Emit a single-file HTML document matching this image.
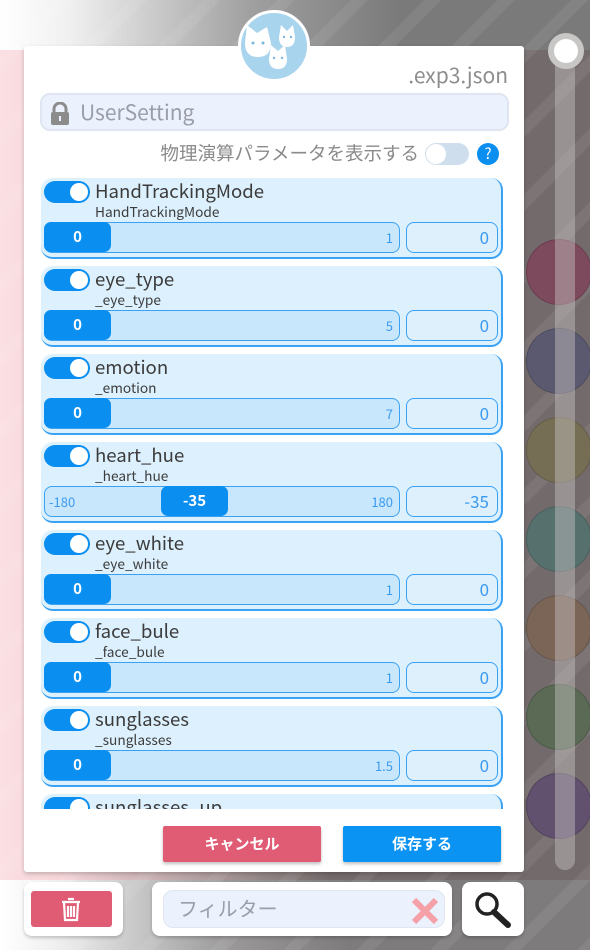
<!DOCTYPE html>
<html><head><meta charset="utf-8"><style>
*{box-sizing:border-box;margin:0;padding:0}
body{width:590px;height:950px;overflow:hidden;position:relative;font-family:"Noto Sans CJK JP","Liberation Sans",sans-serif;background:#726a6a}
.bgl{position:absolute;left:0;top:0;width:590px;height:950px;background:linear-gradient(90deg,#fbdfe2 0,#f6d6d9 60px,#b7a3a5 190px,#736b6b 330px,#736b6b 100%)}
.bgt{position:absolute;left:0;top:0;width:590px;height:50px;background:linear-gradient(90deg,#fff 0,#f0f0f0 70px,#a0a0a0 250px,#7a7a7a 400px)}
.bgb{position:absolute;left:0;top:880px;width:590px;height:70px;background:linear-gradient(90deg,#fff 0,#eee 60px,#9a9898 230px,#7d7b7b 350px)}
.stripes{position:absolute;left:0;top:0;width:590px;height:950px;background:repeating-linear-gradient(135deg,rgba(255,255,255,0) 0 40px,rgba(255,255,255,.07) 40px 52px)}
.panel{position:absolute;left:24px;top:46px;width:500px;height:826px;background:#fff;border-radius:3px;box-shadow:0 2px 4px rgba(0,0,0,.2)}
.avatar{position:absolute;left:238px;top:10px;width:72px;height:72px;border-radius:50%;background:#a9d4ee;border:3px solid #fff}
.ext{position:absolute;right:82px;top:60px;font-size:21px;color:#8d8d8d}
.name{position:absolute;left:40px;top:93px;width:469px;height:38px;border-radius:10px;background:#ebf1fd;border:2px solid #dfe5f1;color:#9a9ea8;font-size:21px;line-height:24px;padding:5px 0 0 38px}
.lock{position:absolute;left:8px;top:7px}
.phys{position:absolute;right:171px;top:141px;font-size:18.5px;line-height:24px;color:#8a8a8a}
.tog0{position:absolute;left:425px;top:143px;width:44px;height:22px;border-radius:11px;background:#cfdeec}
.tog0:after{content:"";position:absolute;left:1px;top:1px;width:20px;height:20px;border-radius:50%;background:#fff}
.help{position:absolute;left:477px;top:143px;width:22px;height:22px;border-radius:50%;background:#0a8ef0;color:#fff;font-size:15px;text-align:center;line-height:22px}
.list{position:absolute;left:40px;top:178px;width:464px;height:631px;overflow:hidden}
.card{position:absolute;left:1px;width:462px;height:81px;background:#ddf0fd;border-radius:12px;border-bottom:2px solid #3aa2f5;border-right:2px solid #3aa2f5}
.tg{position:absolute;left:3px;top:3px;width:46px;height:22px;border-radius:11px;background:#0a8ef0}
.tg:after{content:"";position:absolute;right:2px;top:2px;width:18px;height:18px;border-radius:50%;background:#fff}
.t1{position:absolute;left:54px;top:0px;font-size:18.6px;line-height:26px;color:#3c3c3c}
.t2{position:absolute;left:54px;top:24px;font-size:13.7px;line-height:18px;color:#3c3c3c}
.sl{position:absolute;left:3px;top:44px;width:356px;height:31px;border:1.5px solid #3aa2f5;border-radius:8px;background:#c9e7fc;color:#3a9af0;font-size:13px;line-height:18px}
.kn{position:absolute;top:-1px;height:30px;width:67px;background:#0a8ef0;border-radius:7px;color:#fff;font-weight:bold;font-size:15px;text-align:center;line-height:30px}
.mx{position:absolute;right:6px;top:6px}
.mn{position:absolute;left:4px;top:6px}
.nb{position:absolute;left:365px;top:44px;width:92px;height:31px;border:1.5px solid #3aa2f5;border-radius:8px;background:#dff0fd;color:#3a9af0;font-size:17px;line-height:22px;text-align:right;padding:3px 8px 0 0}
.btn{position:absolute;top:826px;width:158px;height:36px;color:#fff;font-weight:bold;font-size:15px;text-align:center;line-height:36px;border-radius:2px;box-shadow:0 2px 3px rgba(0,0,0,.25)}
.box{position:absolute;background:#fff;border-radius:8px;box-shadow:0 2px 3px rgba(0,0,0,.2)}
.track{position:absolute;left:555px;top:35px;width:20px;height:835px;border-radius:10px;background:rgba(200,195,195,.45)}
.thumb{position:absolute;left:548px;top:33px;width:36px;height:36px;border-radius:50%;background:#fff;border:6px solid #c9c6c6}
.c{position:absolute;left:526px;width:66px;height:66px;border-radius:50%;border:1px solid rgba(0,0,0,.15)}
</style></head><body>
<div class="bgl"></div><div class="bgt"></div><div class="bgb"></div><div class="stripes"></div>
<div class="c" style="top:239px;background:#7c4a5c"></div>
<div class="c" style="top:328px;background:#5b596f"></div>
<div class="c" style="top:417px;background:#766d55"></div>
<div class="c" style="top:506px;background:#56706e"></div>
<div class="c" style="top:595px;background:#7a6557"></div>
<div class="c" style="top:684px;background:#5a6a55"></div>
<div class="c" style="top:773px;background:#61506e"></div>
<div class="track"></div><div class="thumb"></div>
<div class="panel"></div>
<div class="avatar"><svg width="66" height="66" viewBox="0 0 66 66"><g fill="#fff"><path d="M4 30 L6 12 L16 20 L26 14 L30 30 Q30 44 17 44 Q4 44 4 30Z"/><path d="M38 24 L40 12 L46 18 L52 12 L54 24 Q54 34 46 34 Q38 34 38 24Z"/><path d="M28 46 L30 32 L37 38 L44 32 L46 46 Q46 56 37 56 Q28 56 28 46Z"/></g><g fill="#7ab8dc"><circle cx="12" cy="30" r="1.5"/><circle cx="22" cy="30" r="1.5"/><circle cx="33" cy="45" r="1.2"/><circle cx="41" cy="45" r="1.2"/><circle cx="43" cy="24" r="1.2"/><circle cx="50" cy="24" r="1.2"/></g></svg></div>
<div class="ext">.exp3.json</div>
<div class="name"><svg class="lock" width="20" height="24" viewBox="0 0 20 24"><path d="M4 10V7a6 6 0 0112 0v3" fill="none" stroke="#8c8c8c" stroke-width="3"/><rect x="1" y="10" width="18" height="13" rx="2" fill="#8c8c8c"/><rect x="9" y="14" width="2" height="5" fill="#ebf1fd"/></svg>UserSetting</div>
<div class="phys">物理演算パラメータを表示する</div>
<div class="tog0"></div><div class="help">?</div>
<div class="list">
<div class="card" style="top:0"><div class="tg"></div><div class="t1">HandTrackingMode</div><div class="t2">HandTrackingMode</div><div class="sl"><div class="kn" style="left:-1px">0</div><span class="mx">1</span></div><div class="nb">0</div></div>
<div class="card" style="top:88px"><div class="tg"></div><div class="t1">eye_type</div><div class="t2">_eye_type</div><div class="sl"><div class="kn" style="left:-1px">0</div><span class="mx">5</span></div><div class="nb">0</div></div>
<div class="card" style="top:176px"><div class="tg"></div><div class="t1">emotion</div><div class="t2">_emotion</div><div class="sl"><div class="kn" style="left:-1px">0</div><span class="mx">7</span></div><div class="nb">0</div></div>
<div class="card" style="top:264px"><div class="tg"></div><div class="t1">heart_hue</div><div class="t2">_heart_hue</div><div class="sl"><span class="mn">-180</span><div class="kn" style="left:116px">-35</div><span class="mx">180</span></div><div class="nb">-35</div></div>
<div class="card" style="top:352px"><div class="tg"></div><div class="t1">eye_white</div><div class="t2">_eye_white</div><div class="sl"><div class="kn" style="left:-1px">0</div><span class="mx">1</span></div><div class="nb">0</div></div>
<div class="card" style="top:440px"><div class="tg"></div><div class="t1">face_bule</div><div class="t2">_face_bule</div><div class="sl"><div class="kn" style="left:-1px">0</div><span class="mx">1</span></div><div class="nb">0</div></div>
<div class="card" style="top:528px"><div class="tg"></div><div class="t1">sunglasses</div><div class="t2">_sunglasses</div><div class="sl"><div class="kn" style="left:-1px">0</div><span class="mx">1.5</span></div><div class="nb">0</div></div>
<div class="card" style="top:616px"><div class="tg"></div><div class="t1">sunglasses_up</div></div>
</div>
<div class="btn" style="left:163px;background:#e05c75">キャンセル</div>
<div class="btn" style="left:343px;background:#0a93f2">保存する</div>
<div class="box" style="left:24px;top:882px;width:99px;height:54px"><div style="position:absolute;left:7px;top:9px;width:81px;height:36px;background:#e05c75;border-radius:3px"><svg style="position:absolute;left:29px;top:5px" width="22" height="26" viewBox="0 0 22 26"><g fill="none" stroke="#fff" stroke-width="2.2"><path d="M8 3h6M2 6h18M4 6l1 18h12l1-18M8 10v11M11 10v11M14 10v11"/></g></svg></div></div>
<div class="box" style="left:152px;top:882px;width:300px;height:54px"><div style="position:absolute;left:11px;top:8px;width:282px;height:38px;background:#ebf1fd;border:1.5px solid #dfe5f1;border-radius:10px;font-size:20px;line-height:24px;color:#9a9ea8;padding:5px 0 0 14px">フィルター</div><svg style="position:absolute;left:258px;top:14px" width="30" height="30" viewBox="0 0 30 30"><path d="M4 4L26 26M26 4L4 26" stroke="#f6a0a8" stroke-width="6"/></svg></div>
<div class="box" style="left:462px;top:882px;width:62px;height:54px"><svg style="position:absolute;left:10px;top:8px" width="42" height="40" viewBox="0 0 42 40"><circle cx="15" cy="14" r="10" fill="none" stroke="#222" stroke-width="3.5"/><path d="M22 22L36 35" stroke="#222" stroke-width="6" stroke-linecap="round"/></svg></div>
</body></html>
